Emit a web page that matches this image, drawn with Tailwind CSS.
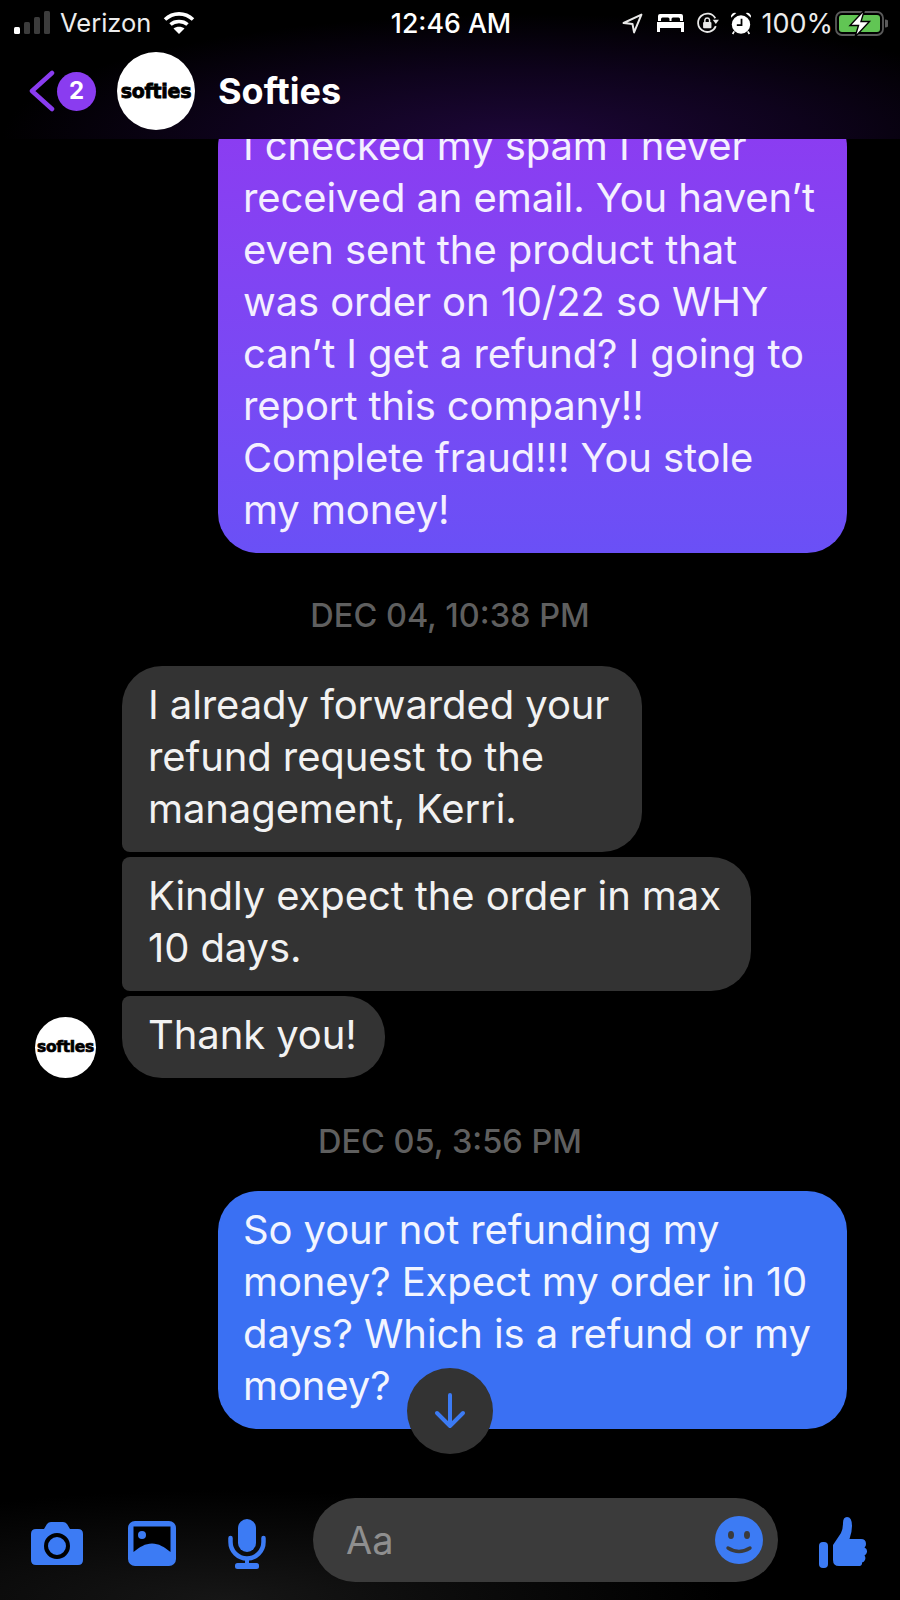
<!DOCTYPE html>
<html>
<head>
<meta charset="utf-8">
<script src="https://cdn.jsdelivr.net/npm/@tailwindcss/browser@4"></script>
</head>
<body class="bg-black">
<div class="relative w-[900px] h-[1600px] bg-black text-white overflow-hidden flex flex-col font-['Inter','Liberation_Sans',sans-serif]">
  <header class="h-[139px] shrink-0 bg-[radial-gradient(ellipse_520px_125px_at_58%_100%,#1d0738_0%,#0e031c_55%,#000000_100%)]">
    <div class="h-[46px] flex items-center pl-[14px] pr-[12px]">
      <div class="flex-1 flex items-center">
        <svg width="38" height="24" viewBox="0 0 38 24"><rect x="0" y="16" width="6" height="7" rx="1.5" fill="#fff"/><rect x="10" y="11" width="6" height="12" rx="1.5" fill="#3c3c3c"/><rect x="20" y="6" width="6" height="17" rx="1.5" fill="#3c3c3c"/><rect x="30" y="0" width="6" height="23" rx="1.5" fill="#3c3c3c"/></svg>
        <span class="ml-[8px] text-[25.5px] leading-none text-[#ececec]">Verizon</span>
        <svg width="32" height="25" viewBox="0 0 32 25" class="ml-[12px] mb-[2px]" fill="none" stroke="#fff" stroke-width="3.6"><path d="M2 9.5 C10 2 22 2 30 9.5"/><path d="M7.5 14.5 C12 10.5 20 10.5 24.5 14.5"/><path d="M16 24 L10.5 18.5 C13.5 16 18.5 16 21.5 18.5 Z" fill="#fff" stroke="none"/></svg>
      </div>
      <span class="text-[26.7px] leading-none font-medium">12:46 AM</span>
      <div class="flex-1 flex items-center justify-end">
        <svg width="21" height="21" viewBox="0 0 20 20" fill="none" stroke="#e8e8e8" stroke-width="1.9" stroke-linejoin="round"><path d="M18.5 1.5 L1.5 9.5 L10 10.5 L11.5 18.5 Z"/></svg>
        <svg width="27" height="18" viewBox="0 0 27 18" class="ml-[14px]" fill="#fff"><path d="M3 0 H24 A2 2 0 0 1 26 2 V7 H23 V5 A1.5 1.5 0 0 0 21.5 3.5 H16 A1.5 1.5 0 0 0 14.5 5 V7 H12.5 V5 A1.5 1.5 0 0 0 11 3.5 H5.5 A1.5 1.5 0 0 0 4 5 V7 H1 V2 A2 2 0 0 1 3 0 Z"/><rect x="0" y="8" width="27" height="6"/><rect x="0" y="14" width="3" height="4"/><rect x="24" y="14" width="3" height="4"/></svg>
        <svg width="24" height="22" viewBox="0 0 23 21" class="ml-[12px]" fill="none" stroke="#e8e8e8" stroke-width="1.7"><path d="M19 13.5 A8.8 8.8 0 1 1 18.5 6"/><path d="M16 7.5 L22 7.5 L19 11.5 Z" fill="#e8e8e8" stroke="none"/><rect x="6.8" y="9.5" width="8" height="6" rx="1" fill="#e8e8e8" stroke="none"/><path d="M8.5 9.5 V7.5 A2.3 2.3 0 0 1 13 7.5 V9.5" stroke-width="1.4"/></svg>
        <svg width="22" height="23" viewBox="0 0 21 22" class="ml-[10px]"><circle cx="10.5" cy="12" r="8.8" fill="#fff"/><path d="M11 6.5 V12.5 H6.5" fill="none" stroke="#000" stroke-width="1.7"/><path d="M1 5.5 A3.8 3.8 0 0 1 6 1 Z M20 5.5 A3.8 3.8 0 0 0 15 1 Z" fill="#fff"/><path d="M4 18.5 L2.5 21 M17 18.5 L18.5 21" stroke="#fff" stroke-width="1.6"/></svg>
        <span class="ml-[9px] text-[27px] leading-none text-[#ececec]">100%</span>
        <svg width="53" height="25" viewBox="0 0 53 25" class="ml-[2px]"><rect x="1" y="1" width="47" height="23" rx="6" fill="none" stroke="#5a5a5a" stroke-width="1.8"/><rect x="4" y="4" width="41" height="17" rx="3" fill="#61c554"/><path d="M50 8.5 A4 4 0 0 1 50 16.5 Z" fill="#5a5a5a"/><path d="M29.5 -1 L15 14.5 H23.5 L20 26 L34.5 10.5 H26 Z" fill="#fff" stroke="#000" stroke-width="1.4"/></svg>
      </div>
    </div>
    <div class="h-[93px] flex items-start pt-[6px] pl-[28px]">
      <div class="h-[78px] flex items-center">
        <svg width="28" height="42" viewBox="0 0 28 42" fill="none" stroke="#8a3cf0" stroke-width="4.5" stroke-linecap="round" stroke-linejoin="round"><path d="M24 3 L4 21 L24 39"/></svg>
        <div class="w-[39px] h-[39px] rounded-full bg-[#8a3cf0] ml-[1px] flex items-center justify-center text-[24px] font-bold leading-none">2</div>
      </div>
      <div class="w-[78px] h-[78px] rounded-full bg-white ml-[21px] flex items-center justify-center overflow-hidden">
        <span class="text-black text-[19px] font-bold leading-none tracking-[-0.3px] font-['DejaVu_Sans',sans-serif] [-webkit-text-stroke:0.8px_#000]">softies</span>
      </div>
      <div class="h-[78px] flex items-center ml-[23px] text-[36px] font-bold leading-none">Softies</div>
    </div>
  </header>

  <main class="flex-1 overflow-hidden flex flex-col text-[40px] leading-[52px] tracking-[-0.1px]">
    <div class="ml-[218px] w-[629px] -mt-[32px] shrink-0 rounded-[40px] bg-gradient-to-b from-[#8d3bf1] to-[#6a50f6] pl-[25px] pr-[20px] pt-[13px] pb-[17px] text-[#f4f0ff]">
      I checked my spam I never<br>received an email. You haven’t<br>even sent the product that<br>was order on 10/22 so WHY<br>can’t I get a refund? I going to<br>report this company!!<br>Complete fraud!!! You stole<br>my money!
    </div>

    <div class="mt-[45px] mb-[32px] h-[36px] text-center text-[32.5px] leading-[36px] font-medium tracking-normal text-[#5f5f5f]">DEC 04, 10:38 PM</div>

    <div class="pl-[122px] flex flex-col items-start gap-[5px] text-[#f2f2f2]">
      <div class="w-[520px] bg-[#333333] rounded-[40px] rounded-bl-[8px] pl-[26px] pt-[13px] pb-[17px]">I already forwarded your<br>refund request to the<br>management, Kerri.</div>
      <div class="w-[629px] bg-[#333333] rounded-[40px] rounded-l-[8px] pl-[26px] pt-[13px] pb-[17px]">Kindly expect the order in max<br>10 days.</div>
    </div>
    <div class="mt-[5px] pl-[35px] flex items-end gap-[26px] text-[#f2f2f2]">
      <div class="w-[61px] h-[61px] rounded-full bg-white flex items-center justify-center overflow-hidden shrink-0">
        <span class="text-black text-[15.5px] font-bold leading-none tracking-[-0.3px] font-['DejaVu_Sans',sans-serif] [-webkit-text-stroke:0.7px_#000]">softies</span>
      </div>
      <div class="w-[263px] bg-[#333333] rounded-[40px] rounded-tl-[8px] pl-[26px] pt-[13px] pb-[17px]">Thank you!</div>
    </div>

    <div class="mt-[46px] mb-[31px] h-[36px] text-center text-[32.5px] leading-[36px] font-medium tracking-normal text-[#5f5f5f]">DEC 05, 3:56 PM</div>

    <div class="ml-[218px] w-[629px] shrink-0 rounded-[40px] bg-[#3a70f3] pl-[25px] pt-[13px] pb-[17px] text-[#f2f5ff]">
      So your not refunding my<br>money? Expect my order in 10<br>days? Which is a refund or my<br>money?
    </div>
  </main>

  <footer class="h-[120px] shrink-0 pt-[18px] flex items-start bg-[radial-gradient(ellipse_500px_110px_at_25%_100%,#161616_0%,#000000_100%)]">
    <svg width="54" height="45" viewBox="0 0 54 45" class="ml-[30px] mt-[23px]"><path d="M6 8 H14 L17 3 Q18.5 1 21 1 H33 Q35.5 1 37 3 L40 8 H48 Q53 8 53 13 V39 Q53 44 48 44 H6 Q1 44 1 39 V13 Q1 8 6 8 Z" fill="#3c7bf4"/><circle cx="27" cy="25" r="11" fill="none" stroke="#000" stroke-width="4"/></svg>
    <svg width="48" height="45" viewBox="0 0 48 45" class="ml-[44px] mt-[23px]"><rect x="0" y="0" width="48" height="45" rx="7" fill="#3c7bf4"/><path d="M5.5 5.5 H42.5 V31 C36 26 31 22.5 24 22.5 C17 22.5 12 26 5.5 31 Z" fill="#000"/><circle cx="14" cy="14" r="4" fill="#3c7bf4"/></svg>
    <svg width="38" height="50" viewBox="0 0 38 50" class="ml-[52px] mt-[21px]"><rect x="10" y="0" width="18" height="33" rx="9" fill="#3c7bf4"/><path d="M2.5 19 V23 A16.5 16.5 0 0 0 35.5 23 V19" fill="none" stroke="#3c7bf4" stroke-width="4.5" stroke-linecap="round"/><rect x="17" y="38" width="4" height="8" fill="#3c7bf4"/><rect x="7" y="44" width="24" height="6" rx="2.5" fill="#3c7bf4"/></svg>
    <div class="ml-[47px] w-[465px] h-[84px] rounded-full bg-[#3b3b3b] flex items-center justify-between pl-[33px] pr-[15px]">
      <span class="text-[38px] leading-none text-[#8f8f8f]">Aa</span>
      <svg width="48" height="48" viewBox="0 0 48 48"><circle cx="24" cy="24" r="24" fill="#3c7bf4"/><ellipse cx="16" cy="19" rx="3" ry="4" fill="#3b3b3b"/><ellipse cx="32" cy="19" rx="3" ry="4" fill="#3b3b3b"/><path d="M13 32 Q24 39 35 32" fill="none" stroke="#3b3b3b" stroke-width="3.4" stroke-linecap="round"/></svg>
    </div>
    <svg width="49" height="52" viewBox="0 0 49 52" class="ml-[41px] mt-[19px]" fill="#3c7bf4"><rect x="0" y="25" width="9" height="26" rx="4"/><path d="M14 28 L22 16 Q24 12 24 6 Q24 0 28 0 Q33 0 33 9 Q33 15 30.5 22 H42 Q47 22 47 27 Q47 29.5 45.5 30.5 Q48.5 32 48 35 Q47.5 37.5 45.5 38.5 Q47 40.5 46 43 Q45 45 43 45.5 Q43.5 49 39 49 H20 Q14 49 14 43 Z"/></svg>
  </footer>

  <div class="absolute left-[407px] top-[1368px] w-[86px] h-[86px] rounded-full bg-[#333333] flex items-center justify-center">
    <svg width="32" height="38" viewBox="0 0 32 38" fill="none" stroke="#3c7bf4" stroke-width="4" stroke-linecap="round" stroke-linejoin="round"><path d="M16 3 V34 M3 21 L16 34 L29 21"/></svg>
  </div>
</div>
</body>
</html>
